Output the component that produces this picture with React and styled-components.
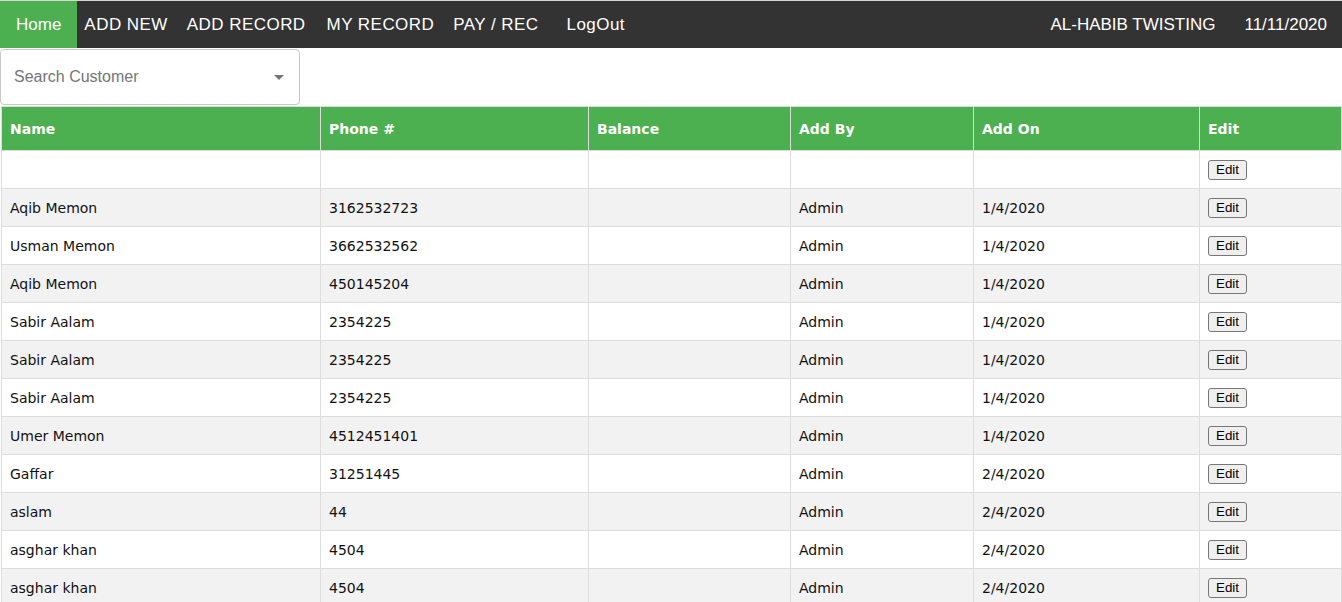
import React from 'react';
import styled, { createGlobalStyle } from 'styled-components';

const rows = [
    ['', '', '', '', ''],
    ['Aqib Memon', '3162532723', '', 'Admin', '1/4/2020'],
    ['Usman Memon', '3662532562', '', 'Admin', '1/4/2020'],
    ['Aqib Memon', '450145204', '', 'Admin', '1/4/2020'],
    ['Sabir Aalam', '2354225', '', 'Admin', '1/4/2020'],
    ['Sabir Aalam', '2354225', '', 'Admin', '1/4/2020'],
    ['Sabir Aalam', '2354225', '', 'Admin', '1/4/2020'],
    ['Umer Memon', '4512451401', '', 'Admin', '1/4/2020'],
    ['Gaffar', '31251445', '', 'Admin', '2/4/2020'],
    ['aslam', '44', '', 'Admin', '2/4/2020'],
    ['asghar khan', '4504', '', 'Admin', '2/4/2020'],
    ['asghar khan', '4504', '', 'Admin', '2/4/2020'],
];

const columns = [
    { title: 'Name', width: 319 },
    { title: 'Phone #', width: 268 },
    { title: 'Balance', width: 202 },
    { title: 'Add By', width: 183 },
    { title: 'Add On', width: 226 },
    { title: 'Edit' },
];

const App = () => (
    <>
    <GlobalStyle />
    <Page>
        <NavBar>
            <NavLink active>Home</NavLink>
            <NavLink gap={7}>ADD NEW</NavLink>
            <NavLink gap={19}>ADD RECORD</NavLink>
            <NavLink gap={21}>MY RECORD</NavLink>
            <NavLink gap={19}>PAY / REC</NavLink>
            <NavLink gap={28}>LogOut</NavLink>
            <NavRight>
                <NavText>AL-HABIB TWISTING</NavText>
                <NavText>11/11/2020</NavText>
            </NavRight>
        </NavBar>

        <SearchBox>
            <Placeholder>Search Customer</Placeholder>
            <Caret />
        </SearchBox>

        <Table>
            <colgroup>
                {columns.map((c, i) => (
                    <col key={i} style={c.width ? { width: c.width } : undefined} />
                ))}
            </colgroup>
            <thead>
                <tr>
                    {columns.map(c => <Th key={c.title}>{c.title}</Th>)}
                </tr>
            </thead>
            <tbody>
                {rows.map((r, i) => (
                    <Row key={i}>
                        {r.map((v, j) => <Td key={j}>{v}</Td>)}
                        <Td><EditButton>Edit</EditButton></Td>
                    </Row>
                ))}
            </tbody>
        </Table>
    </Page>
    </>
);

const GlobalStyle = createGlobalStyle`
    body {
        margin: 0;
        background: white;
        font-family: "Liberation Sans", Arial, sans-serif;
    }
`;

const Page = styled.div`
    border-top: 1px solid #d6d6d6;
`;

// 상단 메뉴
const NavBar = styled.nav`
    display: flex;
    align-items: stretch;
    height: 47px;
    background: #333333;
    font-family: "Liberation Sans", Arial, sans-serif;
    font-size: 17px;
    color: white;
`;

const NavLink = styled.a`
    display: flex;
    align-items: center;
    padding: ${p => (p.active ? '0 16px' : '0')};
    margin-left: ${p => p.gap || 0}px;
    letter-spacing: ${p => (p.active ? '0' : '0.45px')};
    background: ${p => (p.active ? '#4CAF50' : 'transparent')};
    color: white;
    cursor: pointer;
`;

const NavRight = styled.div`
    margin-left: auto;
    display: flex;
    align-items: center;
    gap: 29px;
    padding-right: 15px;
`;

const NavText = styled.span`
    color: white;
`;

const SearchBox = styled.div`
    position: relative;
    box-sizing: border-box;
    width: 300px;
    height: 56px;
    margin-top: 1px;
    display: flex;
    align-items: center;
    padding-left: 13px;
    border: 1px solid #c8c8c8;
    border-radius: 4px;
    background: white;
`;

const Placeholder = styled.span`
    color: #757575;
    font-size: 16px;
`;

const Caret = styled.span`
    position: absolute;
    right: 15px;
    top: 25px;
    width: 0;
    height: 0;
    border-left: 5px solid transparent;
    border-right: 5px solid transparent;
    border-top: 5px solid #757575;
`;

const Table = styled.table`
    width: calc(100% - 1px);
    margin: 1px 0 0 1px;
    border-collapse: collapse;
    table-layout: fixed;
    font-family: "DejaVu Sans", Verdana, sans-serif;
    font-size: 14px;
    color: #111;
`;

const Th = styled.th`
    height: 44px;
    box-sizing: border-box;
    padding: 0 8px;
    text-align: left;
    background: #4CAF50;
    color: white;
    font-weight: bold;
    border: 1px solid #ddd;
`;

const Row = styled.tr`
    &:nth-child(even) {
        background: #f2f2f2;
    }
`;

const Td = styled.td`
    height: 38px;
    box-sizing: border-box;
    padding: 0 8px;
    border: 1px solid #ddd;
    white-space: nowrap;
    overflow: hidden;
`;

const EditButton = styled.button`
    font-family: "Liberation Sans", Arial, sans-serif;
    font-size: 13.33px;
    padding: 1px 7px;
    height: 20px;
    background: #efefef;
    border: 1px solid #767676;
    border-radius: 3px;
    color: black;
`;

export default App;
